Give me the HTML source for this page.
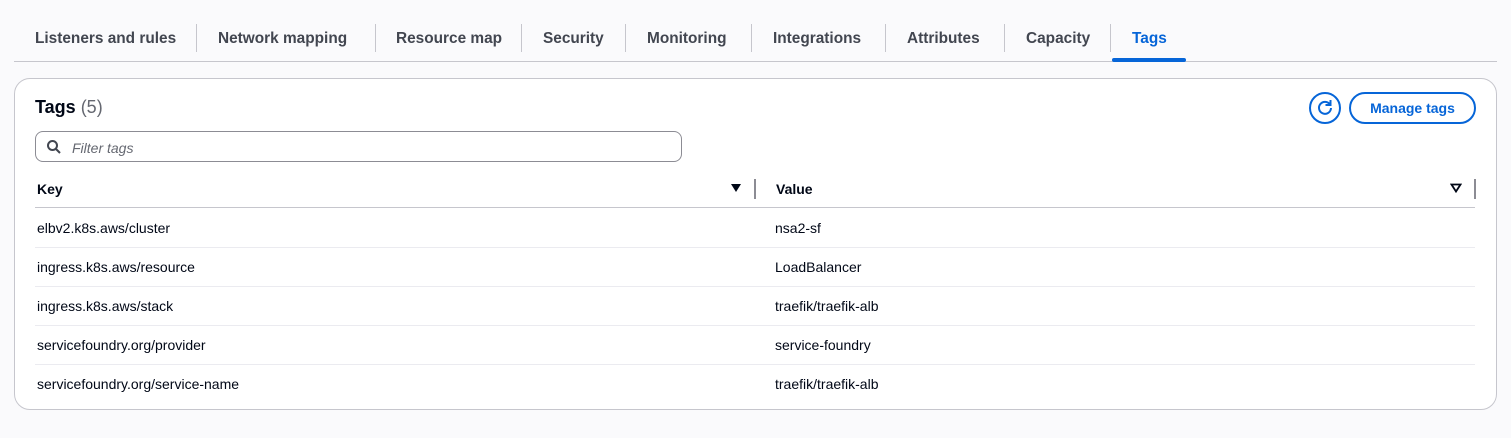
<!DOCTYPE html>
<html><head><style>
body{margin:0;width:1511px;height:438px;background:#fafafc;font-family:"Liberation Sans",sans-serif;color:#000716;position:relative;overflow:hidden}
.a{position:absolute}
.tab{position:absolute;top:30px;font-size:15.4px;font-weight:bold;color:#424650;white-space:nowrap}
.div{position:absolute;top:24px;width:1px;height:28px;background:#c6c6cd}
.cell{position:absolute;font-size:14px;color:#000716}
.rl{position:absolute;left:35px;width:1440px;height:1px;background:#ebebf0}
</style></head><body>
<div class="tab" style="left:35px">Listeners and rules</div>
<div class="div" style="left:196px"></div>
<div class="tab" style="left:218px">Network mapping</div>
<div class="div" style="left:375px"></div>
<div class="tab" style="left:396px">Resource map</div>
<div class="div" style="left:521px"></div>
<div class="tab" style="left:543px">Security</div>
<div class="div" style="left:625px"></div>
<div class="tab" style="left:647px">Monitoring</div>
<div class="div" style="left:751px"></div>
<div class="tab" style="left:773px">Integrations</div>
<div class="div" style="left:885px"></div>
<div class="tab" style="left:907px">Attributes</div>
<div class="div" style="left:1004px"></div>
<div class="tab" style="left:1026px">Capacity</div>
<div class="div" style="left:1110px"></div>
<div class="tab" style="left:1132px;color:#0665d8">Tags</div>
<div class="a" style="left:14px;top:61px;width:1483px;height:1px;background:#c6c6cd"></div>
<div class="a" style="left:1112px;top:58px;width:74px;height:4px;border-radius:2px;background:#0665d8"></div>

<div class="a" style="left:14px;top:78px;width:1481px;height:330px;border:1px solid #c6c6cd;border-radius:16px;background:#fff"></div>
<div class="a" style="left:35px;top:97px;font-size:18px;font-weight:bold">Tags <span style="font-weight:normal;color:#656871">(5)</span></div>
<div class="a" style="left:1309px;top:92px;width:28px;height:28px;border:2px solid #0665d8;border-radius:50%"></div>
<svg class="a" style="left:1314px;top:97px" width="22" height="22" viewBox="0 0 22 22"><path d="M16 7.5A6 6 0 1 0 17 11" fill="none" stroke="#0665d8" stroke-width="2"/><path d="M16.5 3v5h-5" fill="none" stroke="#0665d8" stroke-width="2"/></svg>
<div class="a" style="left:1349px;top:92px;width:123px;height:28px;border:2px solid #0665d8;border-radius:16px;color:#0665d8;font-size:14px;font-weight:bold;text-align:center;line-height:28px">Manage tags</div>
<div class="a" style="left:35px;top:131px;width:645px;height:29px;border:1px solid #8c8c94;border-radius:8px;background:#fff"></div>
<svg class="a" style="left:46px;top:139px" width="16" height="16" viewBox="0 0 16 16"><circle cx="6.5" cy="6.5" r="4.5" fill="none" stroke="#424650" stroke-width="2"/><path d="M10 10l4 4" stroke="#424650" stroke-width="2"/></svg>
<div class="a" style="left:72px;top:140px;font-size:14px;font-style:italic;color:#656871">Filter tags</div>

<div class="cell" style="left:37px;top:181px;font-weight:bold">Key</div>
<svg class="a" style="left:730px;top:183px" width="12" height="10"><path d="M1 1h10L6 9z" fill="#000716"/></svg>
<div class="a" style="left:754px;top:179px;width:2px;height:20px;background:#8c8c94"></div>
<div class="cell" style="left:776px;top:181px;font-weight:bold">Value</div>
<svg class="a" style="left:1450px;top:183px" width="12" height="10"><path d="M1.5 1.5h9L6 8.5z" fill="none" stroke="#000716" stroke-width="1.8"/></svg>
<div class="a" style="left:1474px;top:179px;width:2px;height:20px;background:#8c8c94"></div>
<div class="a" style="left:35px;top:207px;width:1440px;height:1px;background:#c6c6cd"></div>

<div class="cell" style="left:37px;top:220px">elbv2.k8s.aws/cluster</div><div class="cell" style="left:775px;top:220px">nsa2-sf</div>
<div class="rl" style="top:247px"></div>
<div class="cell" style="left:37px;top:259px">ingress.k8s.aws/resource</div><div class="cell" style="left:775px;top:259px">LoadBalancer</div>
<div class="rl" style="top:286px"></div>
<div class="cell" style="left:37px;top:298px">ingress.k8s.aws/stack</div><div class="cell" style="left:775px;top:298px">traefik/traefik-alb</div>
<div class="rl" style="top:325px"></div>
<div class="cell" style="left:37px;top:337px">servicefoundry.org/provider</div><div class="cell" style="left:775px;top:337px">service-foundry</div>
<div class="rl" style="top:364px"></div>
<div class="cell" style="left:37px;top:376px">servicefoundry.org/service-name</div><div class="cell" style="left:775px;top:376px">traefik/traefik-alb</div>
</body></html>
